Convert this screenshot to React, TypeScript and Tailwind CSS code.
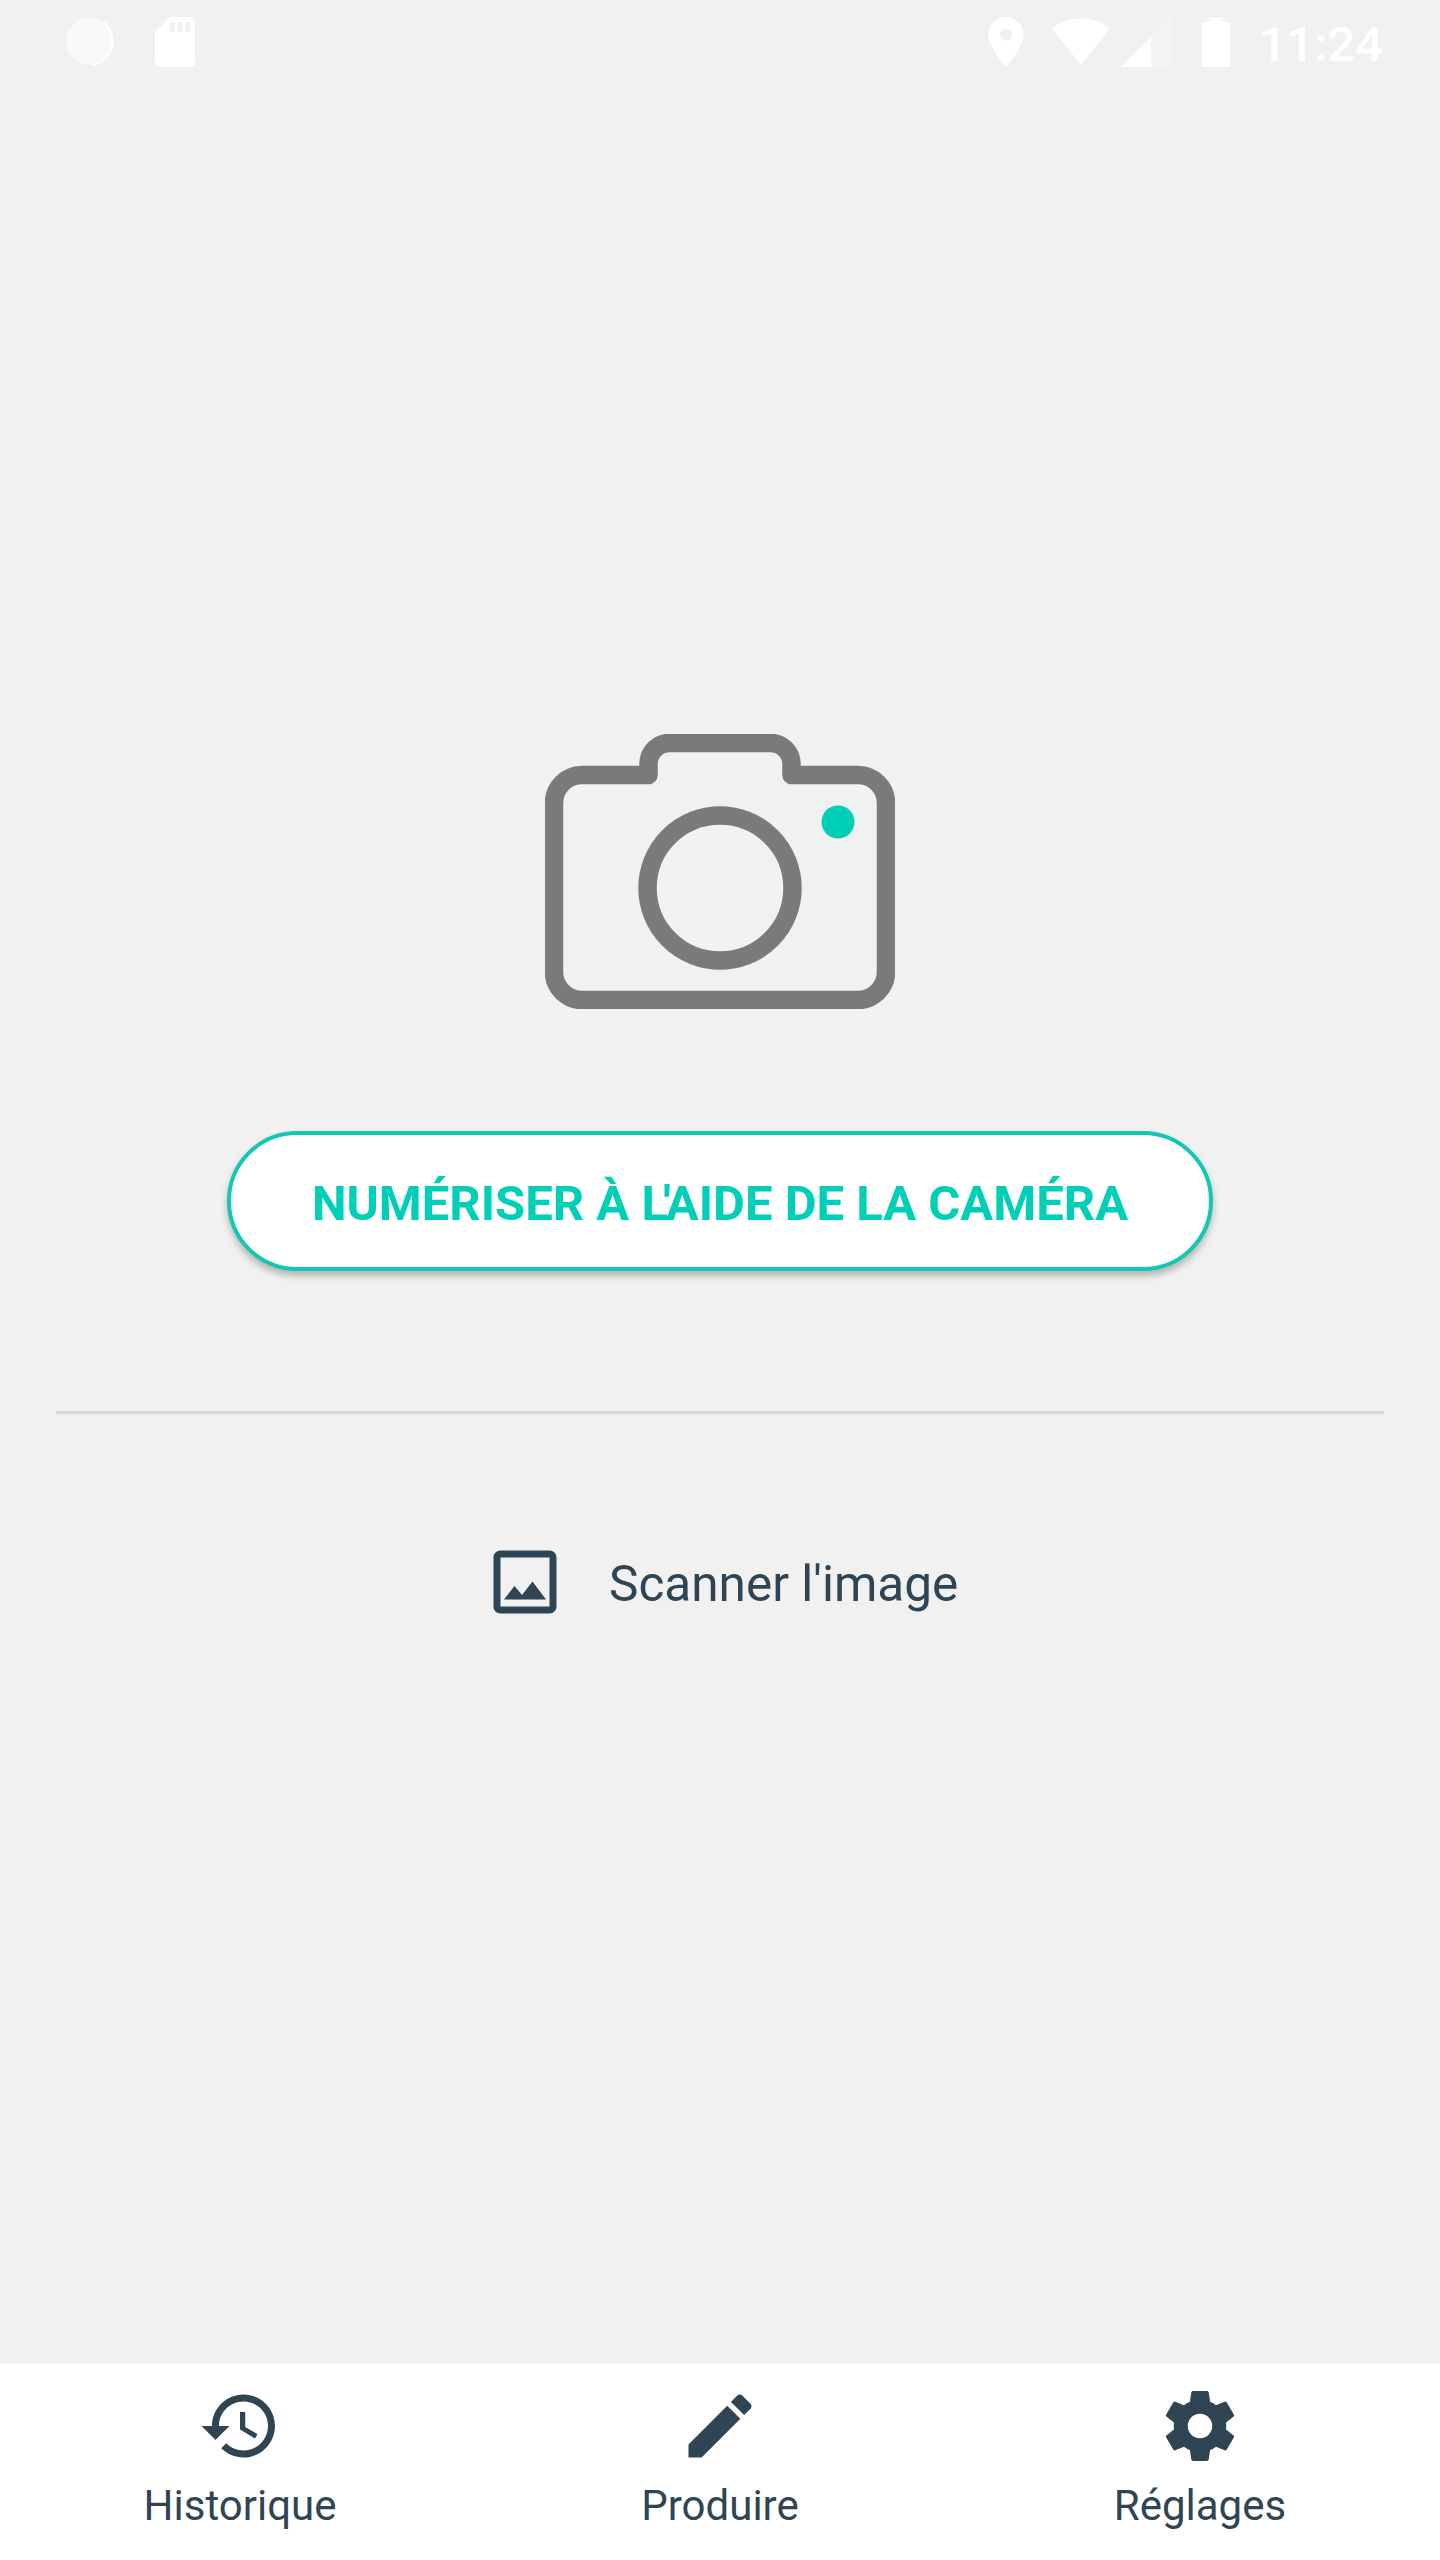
export default function App() {
  const navIcon = "w-[84px] h-[84px] fill-[#2f4554]";
  const label = "mt-[13px] text-[42px] leading-[49px] text-[#2f4554]";
  return (
    <div className="flex flex-col h-[2560px] w-[1440px] bg-[#f1f1f1] font-['Roboto',sans-serif]">
      {/* status bar */}
      <div className="flex items-center h-[84px] pl-[60px] pr-[57px]">
        <svg viewBox="0 0 60 60" className="w-[60px] h-[60px]">
          <circle cx="30" cy="29" r="24" fill="#f8f8f8" />
          <path d="M44 11a24 24 0 0 1-12 42" fill="none" stroke="#ffffff" strokeWidth="2" />
        </svg>
        <svg viewBox="0 0 24 24" className="w-[60px] h-[60px] ml-[25px] fill-white">
          <path d="M18 2h-8L4.02 8 4 20c0 1.1.9 2 2 2h12c1.1 0 2-.9 2-2V4c0-1.1-.9-2-2-2zm-6 6h-2V4h2v4zm3 0h-2V4h2v4zm3 0h-2V4h2v4z" />
        </svg>
        <div className="flex-1" />
        <svg viewBox="0 0 24 24" className="w-[60px] h-[60px] fill-white">
          <path d="M12 2C8.13 2 5 5.13 5 9c0 5.25 7 13 7 13s7-7.75 7-13c0-3.87-3.13-7-7-7zm0 9.5c-1.38 0-2.5-1.12-2.5-2.5s1.12-2.5 2.5-2.5 2.5 1.12 2.5 2.5-1.12 2.5-2.5 2.5z" />
        </svg>
        <svg viewBox="0 0 24 24" className="w-[60px] h-[60px] ml-[15px] -mt-[2px] fill-white">
          <path d="M12.01 21.49L23.64 7c-.45-.34-4.93-4-11.64-4C5.28 3 .81 6.66.36 7l11.64 14.49.01.01z" />
        </svg>
        <svg viewBox="0 0 24 24" className="w-[60px] h-[60px] ml-[5px] fill-white">
          <path d="M2 22h20V2z" fillOpacity="0.3" />
          <path d="M2 22h12V10z" />
        </svg>
        <svg viewBox="0 0 24 24" className="w-[60px] h-[60px] ml-[10px] fill-white">
          <path d="M9.4 4V2h5.2v2h2.6a.6.6 0 0 1 .6.6v16.8a.6.6 0 0 1-.6.6H6.8a.6.6 0 0 1-.6-.6V4.6a.6.6 0 0 1 .6-.6z" />
        </svg>
        <span className="ml-[13px] mt-[5px] text-[49px] leading-[56px] font-medium text-white">11:24</span>
      </div>

      {/* camera */}
      <svg viewBox="0 0 350 275" className="w-[350px] h-[275px] mt-[650px] self-center">
        <path
          d="M103.5 41H37a28 28 0 0 0-28 28V238a28 28 0 0 0 28 28H313a28 28 0 0 0 28-28V69a28 28 0 0 0-28-28H246.5V30a21 21 0 0 0-21-21H124.500a21 21 0 0 0-21 21Z"
          fill="none"
          stroke="#7a7a7a"
          strokeWidth="18.5"
          strokeLinejoin="round"
        />
        <circle cx="175" cy="154" r="72.5" fill="none" stroke="#7a7a7a" strokeWidth="18.5" />
        <circle cx="293" cy="88" r="16.5" fill="#00cfb8" />
      </svg>

      {/* scan button */}
      <button className="mt-[122px] pt-[6px] self-center w-[986px] h-[140px] rounded-[70px] bg-white border-4 border-[#12c7b3] shadow-[0_5px_7px_rgba(0,0,0,0.25)] text-[49px] leading-[56px] font-bold text-[#00cfb8]">
        NUMÉRISER À <span className="tracking-[-5px]">L'</span>AIDE DE LA CAMÉRA
      </button>

      <div className="mt-[140px] mx-[56px] h-[3px] bg-[#d6d6d6]" />

      {/* scan image */}
      <div className="mt-[126px] ml-[483px] flex items-center">
        <svg viewBox="0 0 24 24" className="w-[84px] h-[84px] fill-[#2f4554]">
          <path d="M19 5v14H5V5h14m0-2H5c-1.1 0-2 .9-2 2v14c0 1.1.9 2 2 2h14c1.1 0 2-.9 2-2V5c0-1.1-.9-2-2-2zm-4.86 8.86l-3 3.87L9 13.14 6 17h12l-3.86-5.14z" />
        </svg>
        <span className="ml-[42px] mt-[4px] text-[49.500px] leading-[56px] text-[#2f4554]">Scanner l'image</span>
      </div>

      <div className="flex-1" />

      {/* bottom navigation */}
      <nav className="grid grid-cols-3 h-[196px] bg-white pt-[20px]">
        <div className="flex flex-col items-center">
          <svg viewBox="0 0 24 24" className={navIcon}>
            <path d="M13 3c-4.97 0-9 4.03-9 9H1l3.89 3.89.07.14L9 12H6c0-3.87 3.13-7 7-7s7 3.13 7 7-3.13 7-7 7c-1.93 0-3.68-.79-4.94-2.06l-1.42 1.42C8.27 19.99 10.51 21 13 21c4.97 0 9-4.03 9-9s-4.03-9-9-9zm-1 5v5l4.28 2.54.72-1.21-3.5-2.08V8H12z" />
          </svg>
          <span className={label}>Historique</span>
        </div>
        <div className="flex flex-col items-center">
          <svg viewBox="0 0 24 24" className={navIcon}>
            <path d="M3 17.25V21h3.75L17.81 9.94l-3.75-3.75L3 17.25zM20.71 7.04c.39-.39.39-1.02 0-1.41l-2.34-2.34c-.39-.39-1.02-.39-1.41 0l-1.83 1.83 3.75 3.75 1.83-1.83z" />
          </svg>
          <span className={label}>Produire</span>
        </div>
        <div className="flex flex-col items-center">
          <svg viewBox="0 0 24 24" className={navIcon}>
            <path d="M19.43 12.98c.04-.32.07-.64.07-.98s-.03-.66-.07-.98l2.11-1.65c.19-.15.24-.42.12-.64l-2-3.46c-.12-.22-.39-.3-.61-.22l-2.49 1c-.52-.4-1.08-.73-1.69-.98l-.38-2.65C14.46 2.18 14.25 2 14 2h-4c-.25 0-.46.18-.49.42l-.38 2.65c-.61.25-1.17.59-1.69.98l-2.49-1c-.23-.09-.49 0-.61.22l-2 3.46c-.13.22-.07.49.12.64l2.11 1.65c-.04.32-.07.65-.07.98s.03.66.07.98l-2.11 1.65c-.19.15-.24.42-.12.64l2 3.46c.12.22.39.3.61.22l2.49-1c.52.4 1.08.73 1.69.98l.38 2.65c.03.24.24.42.49.42h4c.25 0 .46-.18.49-.42l.38-2.65c.61-.25 1.17-.59 1.69-.98l2.49 1c.23.09.49 0 .61-.22l2-3.46c.12-.22.07-.49-.12-.64l-2.11-1.65zM12 15.5c-1.93 0-3.5-1.57-3.5-3.5s1.57-3.5 3.5-3.5 3.5 1.57 3.5 3.5-1.57 3.5-3.5 3.5z" />
          </svg>
          <span className={label}>Réglages</span>
        </div>
      </nav>
    </div>
  );
}
